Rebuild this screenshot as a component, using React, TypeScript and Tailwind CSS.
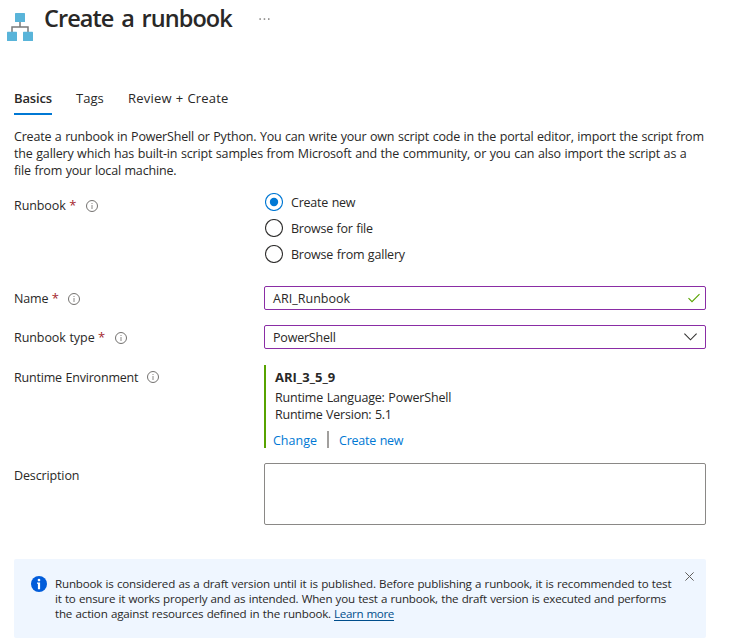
import type { ReactNode } from "react";

function InfoIcon() {
  return (
    <svg width="12" height="12" viewBox="0 0 12 12" className="shrink-0" fill="none">
      <circle cx="6" cy="6" r="5.5" stroke="#6b6967" strokeWidth="0.95" />
      <path d="M6 5v4M6 3v1" stroke="#8a8886" strokeWidth="1" />
    </svg>
  );
}

function Label({ children, required, className, gap }: { children: ReactNode; required?: boolean; className: string; gap?: string }) {
  return (
    <div className={`flex h-[17px] w-[250px] shrink-0 items-center whitespace-nowrap leading-[17px] ${className}`}>
      <span>{children}</span>
      {required && <span className="ml-[3.5px] w-[7.5px] text-[13px] tracking-normal text-[#a4262c]">*</span>}
      {gap && <span className={gap}><InfoIcon /></span>}
    </div>
  );
}

function Radio({ label, checked, tracking }: { label: string; checked?: boolean; tracking: string }) {
  return (
    <div className="flex h-[18px] items-center gap-[8px]">
      <svg width="18" height="18" viewBox="0 0 18 18" fill="none">
        <circle cx="9" cy="9" r="8.5" stroke={checked ? "#0078d4" : "#323130"} strokeWidth="1.1" />
        {checked && <circle cx="9" cy="9" r="4.2" fill="#0078d4" />}
      </svg>
      <span className={`pt-[2px] leading-[18px] ${tracking}`}>{label}</span>
    </div>
  );
}

export default function App() {
  return (
    <div className="h-[644px] w-[744px] overflow-hidden whitespace-nowrap bg-white font-['Open_Sans','Noto_Sans',sans-serif] text-[12.5px] text-[#292827] [word-spacing:0.5px]">
      <header className="flex h-[88px] items-start pl-[7px]">
        <svg width="26" height="28" viewBox="0 0 26 28" className="mt-[13px]">
          <path d="M13 9v5M5 19v-5h16v5" fill="none" stroke="#7a7a7a" strokeWidth="1.5" />
          <rect x="8" y="0" width="10" height="9" rx="0.6" fill="#59b4d9" />
          <rect x="0" y="18.8" width="10" height="9.2" rx="0.6" fill="#59b4d9" />
          <rect x="16" y="18.8" width="10" height="9.2" rx="0.6" fill="#59b4d9" />
        </svg>
        <h1 className="ml-[11px] mt-[2px] w-[189px] text-[23.5px] font-semibold leading-[32px] tracking-[-0.93px] [word-spacing:2.5px]">Create a runbook</h1>
        <svg width="12" height="2" viewBox="0 0 12 2" className="ml-[26px] mt-[18px]" fill="#6b6967">
          <rect x="0.4" y="0.4" width="1.5" height="1.3" />
          <rect x="4.7" y="0.4" width="1.5" height="1.3" />
          <rect x="9" y="0.4" width="1.5" height="1.3" />
        </svg>
      </header>

      <nav className="flex h-[27px] items-stretch pl-[14px] text-[13px] leading-[20px]">
        <div className="w-[38px] border-b-2 border-[#0078d4] font-semibold tracking-[-0.14px]">Basics</div>
        <div className="ml-[24px] w-[28px] tracking-[0.05px]">Tags</div>
        <div className="ml-[24px] tracking-[0.2px]">Review + Create</div>
      </nav>

      <main className="pl-[14px]">
        <div className="h-[74px] pt-[13px] leading-[17px]">
          <p className="tracking-[-0.189px]">Create a runbook in PowerShell or Python. You can write your own script code in the portal editor, import the script from</p>
          <p className="tracking-[-0.163px]">the gallery which has built-in script samples from Microsoft and the community, or you can also import the script as a</p>
          <p className="tracking-[-0.18px]">file from your local machine.</p>
        </div>

        <div className="flex h-[97px]">
          <Label required gap="ml-[9px]" className="mt-[8px] tracking-[-0.08px]">Runbook</Label>
          <div className="flex flex-col gap-[8px] pl-px pt-[4px]">
            <Radio checked label="Create new" tracking="tracking-[-0.22px]" />
            <Radio label="Browse for file" tracking="tracking-[-0.23px]" />
            <Radio label="Browse from gallery" tracking="tracking-[-0.2px]" />
          </div>
        </div>

        <div className="flex h-[39px]">
          <Label required gap="ml-[9px]" className="mt-[4px] tracking-[-0.17px]">Name</Label>
          <div className="flex h-[24px] w-[442px] items-center justify-between rounded-[2px] border border-[#8a2da5] pl-[8px] pr-[5px]">
            <span className="pt-[2px] leading-[20px] tracking-[0.03px]">ARI_Runbook</span>
            <svg width="12" height="10" viewBox="0 0 12 10" fill="none">
              <path d="M0.5 5.2L4 8.7L11.5 1.2" stroke="#57a300" strokeWidth="1.1" />
            </svg>
          </div>
        </div>

        <div className="flex h-[40px]">
          <Label required gap="ml-[9px]" className="mt-[4px] tracking-[-0.07px]">Runbook type</Label>
          <div className="flex h-[24px] w-[442px] items-center justify-between rounded-[2px] border border-[#8a2da5] pl-[8px] pr-[8px]">
            <span className="pt-[2px] leading-[20px] tracking-[-0.2px]">PowerShell</span>
            <svg width="13" height="8" viewBox="0 0 13 8" fill="none">
              <path d="M0.4 0.7L6.5 6.8L12.6 0.7" stroke="#323130" strokeWidth="1.1" />
            </svg>
          </div>
        </div>

        <div className="flex h-[98px]">
          <Label gap="ml-[9px] mb-[2px]" className="mt-[4px] tracking-[-0.195px]">Runtime Environment</Label>
          <div className="h-[83px] border-l-2 border-[#57a300] pt-[4px] leading-[17px]">
            <div className="pl-[9px] text-[13px] font-bold">ARI_3_5_9</div>
            <div className="mt-[3px] pl-[9px] tracking-[-0.17px]">Runtime Language: PowerShell</div>
            <div className="pl-[9px] tracking-[-0.235px]">Runtime Version: 5.1</div>
            <div className="mt-[7px] flex h-[20px] items-start pl-[7px] text-[#0078d4]">
              <span className="mt-[2px] w-[45px]">Change</span>
              <span className="ml-[9px] mt-px h-[17px] w-[2px] bg-[#a19f9d]" />
              <span className="ml-[10px] mt-[2px] tracking-[-0.22px]">Create new</span>
            </div>
          </div>
        </div>

        <div className="flex h-[96px]">
          <Label className="mt-[4px] tracking-[-0.13px]">Description</Label>
          <div className="h-[62px] w-[442px] rounded-[2px] border border-[#8a8886]" />
        </div>

        <section className="flex h-[79px] w-[692px] items-start rounded-[2px] bg-[#eff6ff] text-[11.6px] leading-[15px]">
          <svg width="16" height="16" viewBox="0 0 16 16" className="ml-[17px] mt-[17px]">
            <circle cx="8" cy="8" r="8" fill="#015cda" />
            <path d="M6 6.6h3.1v6.7H6.9V7.8H6z" fill="#fff" />
            <circle cx="8" cy="4.1" r="1.35" fill="#fff" />
          </svg>
          <div className="ml-[8px] mt-[17px] w-[618px]">
            <p className="tracking-[-0.187px]">Runbook is considered as a draft version until it is published. Before publishing a runbook, it is recommended to test</p>
            <p className="tracking-[-0.208px]">it to ensure it works properly and as intended. When you test a runbook, the draft version is executed and performs</p>
            <p className="flex gap-[3px]">
              <span className="tracking-[-0.185px]">the action against resources defined in the runbook.</span>
              <a className="tracking-[-0.33px] text-[#004e8c] underline underline-offset-2">Learn more</a>
            </p>
          </div>
          <svg width="9" height="9" viewBox="0 0 9 9" className="ml-[11.5px] mt-[12.5px]" fill="none">
            <path d="M0.4 0.4L8.6 8.6M8.6 0.4L0.4 8.6" stroke="#605e5c" strokeWidth="1" />
          </svg>
        </section>
      </main>
    </div>
  );
}
